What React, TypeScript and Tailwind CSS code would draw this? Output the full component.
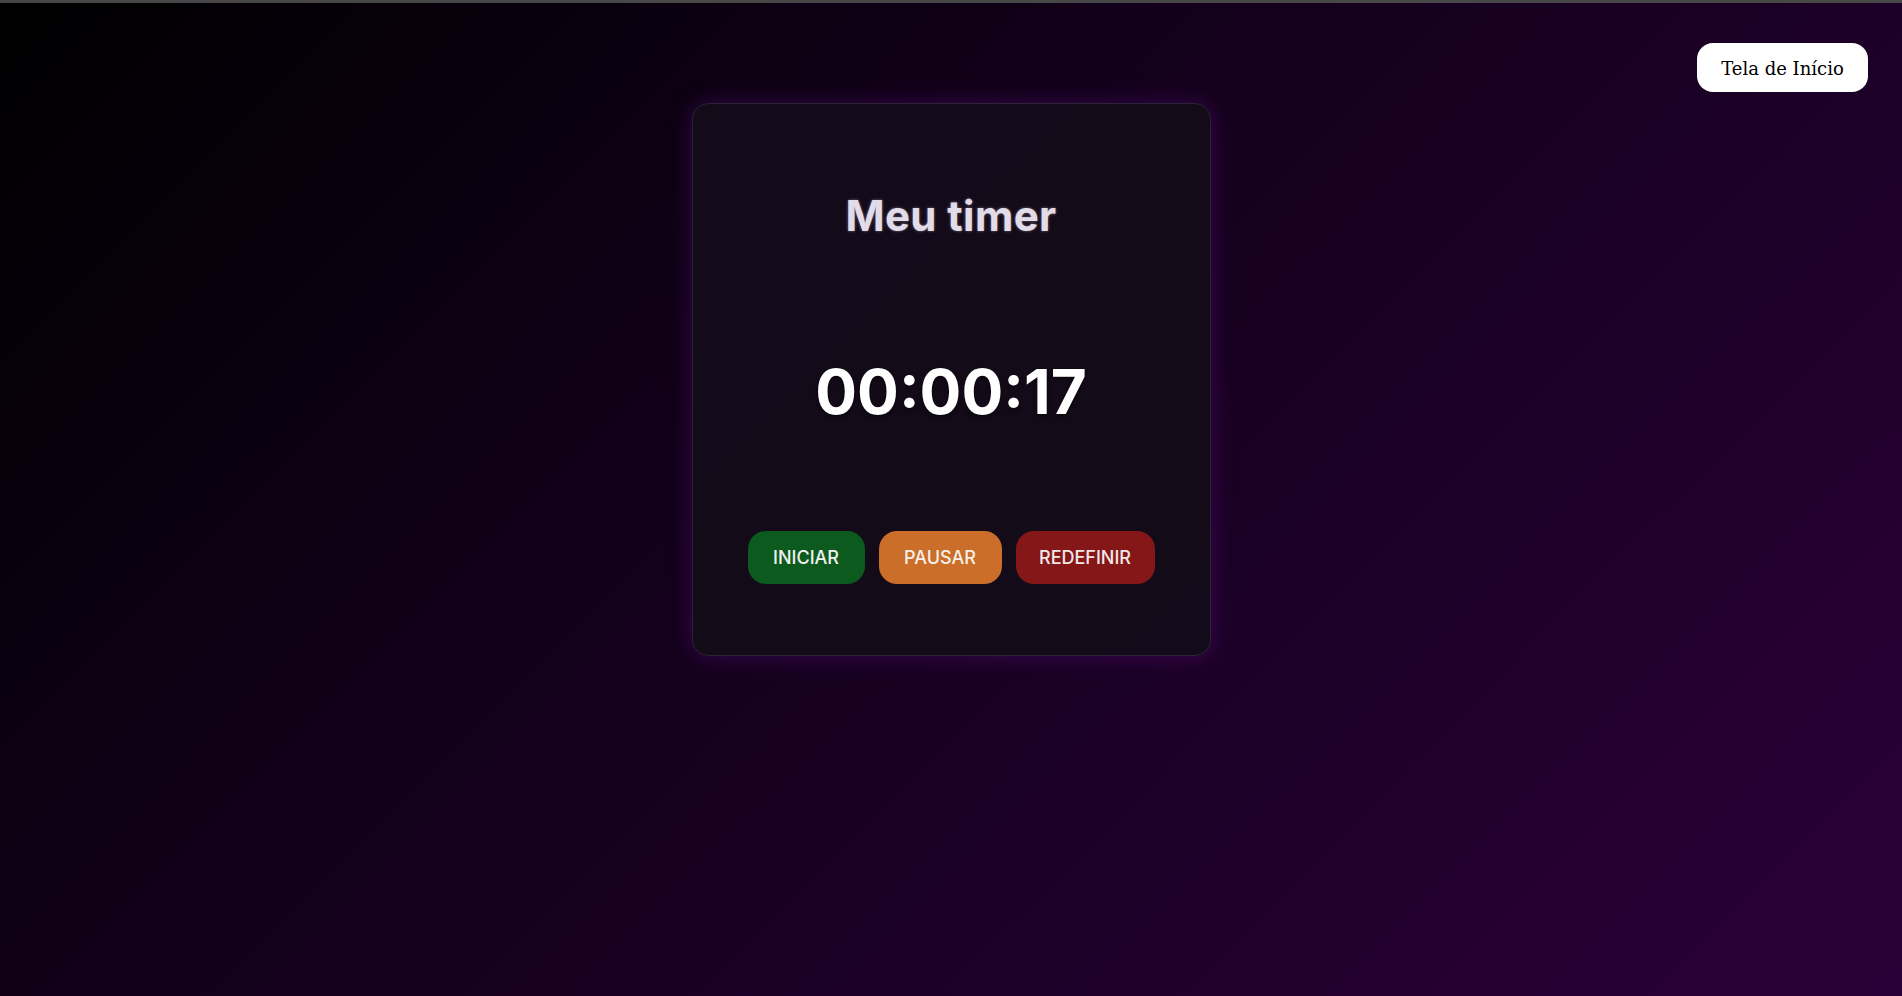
import { useState } from 'react';

const sans = { fontFamily: 'Inter, "Noto Sans", sans-serif' };

export default function App() {
  const [seconds] = useState(17);
  const pad = (n: number) => String(n).padStart(2, '0');
  const time = `${pad(Math.floor(seconds / 3600))}:${pad(Math.floor(seconds / 60) % 60)}:${pad(seconds % 60)}`;

  return (
    <div className="flex min-h-screen flex-col bg-[linear-gradient(135deg,#000000_0%,#12001a_40%,#2b0038_100%)]">
      <div className="h-[3px] bg-[#474747]" />
      <div className="flex justify-end pr-[34px] pt-[40px]">
        <button
          className="h-[49px] w-[171px] rounded-[16px] bg-white pt-[2px] text-[18px] text-black"
          style={{ fontFamily: '"DejaVu Serif", "Liberation Serif", serif' }}
        >
          Tela de Início
        </button>
      </div>
      <div className="mt-[11px] flex justify-center">
        <div
          className="flex h-[553px] w-[519px] flex-col items-center rounded-[16px] border border-[#2c2236] bg-[#140c19]/95 pt-[88px] shadow-[0_0_22px_rgba(120,20,170,0.35)]"
          style={sans}
        >
          <h1 className="text-[42px] font-bold leading-[48px] tracking-[0.01em] text-[#e2dce8] [text-shadow:0_0_3px_rgba(226,220,232,0.45)]">
            Meu timer
          </h1>
          <p className="mt-[120px] text-[62px] font-bold leading-[64px] text-white [text-shadow:0_2px_4px_rgba(0,0,0,0.6)]">
            {time}
          </p>
          <div className="mt-[107px] flex gap-[14px]">
            <button className="h-[53px] w-[117px] rounded-[18px] bg-[#0c5a1e] text-[18px] font-medium text-[#f1f1f1]">
              INICIAR
            </button>
            <button className="h-[53px] w-[123px] rounded-[18px] bg-[#ca6e29] text-[18px] font-medium text-[#f6f0ea]">
              PAUSAR
            </button>
            <button className="h-[53px] w-[139px] rounded-[18px] bg-[#861718] text-[18px] font-medium text-[#f2e8e8]">
              REDEFINIR
            </button>
          </div>
        </div>
      </div>
    </div>
  );
}
